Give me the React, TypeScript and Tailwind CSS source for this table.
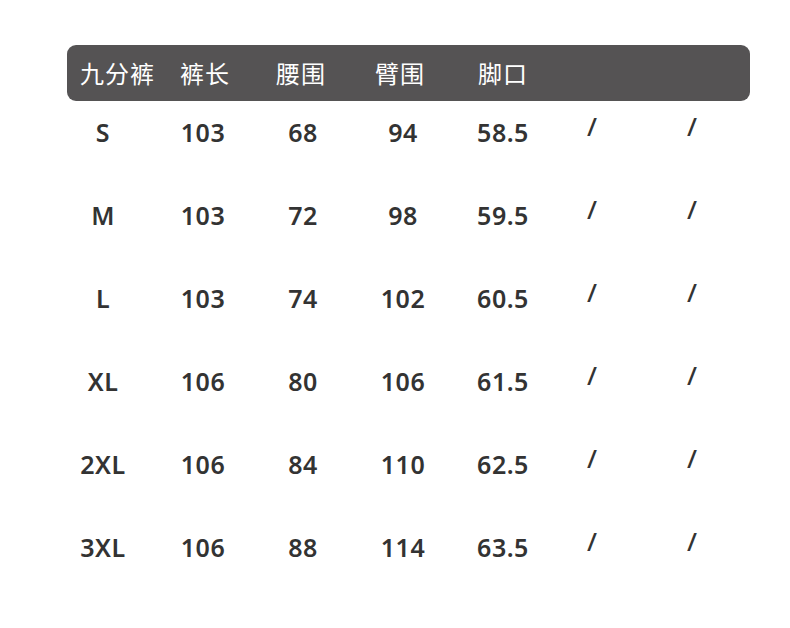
import React from "react";

const rows = [
  ["S", "103", "68", "94", "58.5"],
  ["M", "103", "72", "98", "59.5"],
  ["L", "103", "74", "102", "60.5"],
  ["XL", "106", "80", "106", "61.5"],
  ["2XL", "106", "84", "110", "62.5"],
  ["3XL", "106", "88", "114", "63.5"],
];

export default function App() {
  return (
    <div
      className="w-[790px] h-[628px] bg-white pt-[45px]"
      style={{ fontFamily: '"Noto Sans", "Noto Sans CJK SC", sans-serif' }}
    >
      <div
        className="ml-[67px] w-[683px] h-[56px] rounded-[9px] bg-[#555354] flex items-center pl-[13px] text-white text-[24px]"
        style={{ fontFamily: '"Noto Sans CJK SC", sans-serif' }}
      >
        <div className="w-[100px] leading-none tracking-[1px]">九分裤</div>
        <div className="w-[96px] leading-none tracking-[1px]">裤长</div>
        <div className="w-[99px] leading-none tracking-[1px]">腰围</div>
        <div className="w-[103px] leading-none tracking-[1px]">臂围</div>
        <div className="leading-none tracking-[1px]">脚口</div>
      </div>
      <div className="ml-[53px]">
        {rows.map((r) => (
          <div key={r[0]} className="h-[83px] pt-[15px] grid grid-cols-[100px_100px_100px_100px_100px_100px_100px] items-start">
            {r.map((c, i) => (
              <div key={i} className="text-center text-[25px] leading-[32px] font-semibold tracking-[0.5px] text-[#333333]">
                {c}
              </div>
            ))}
            <div className="pl-[34px] text-[26px] leading-[32px] font-medium text-[#333333] mt-[-6px]">/</div>
            <div className="pl-[34px] text-[26px] leading-[32px] font-medium text-[#333333] mt-[-6px]">/</div>
          </div>
        ))}
      </div>
    </div>
  );
}
